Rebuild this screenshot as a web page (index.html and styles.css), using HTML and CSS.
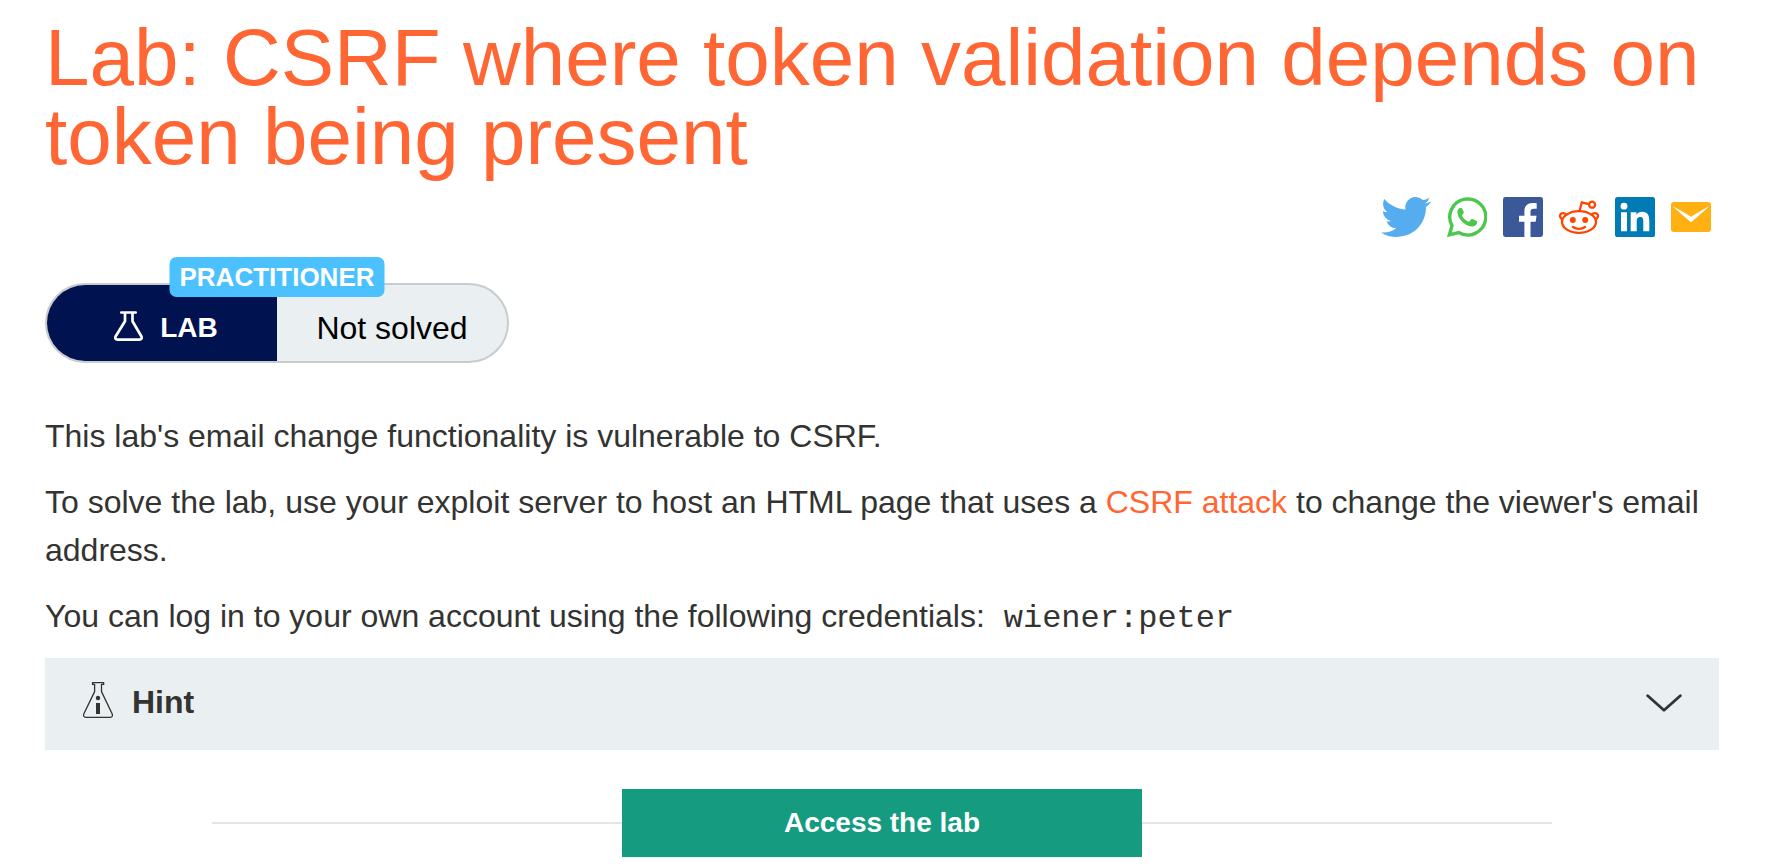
FILE: index.html
```html
<!DOCTYPE html>
<html lang="en">
<head>
<meta charset="utf-8">
<meta name="viewport" content="width=device-width, initial-scale=1">
<title>Lab: CSRF where token validation depends on token being present</title>
<link rel="stylesheet" href="styles.css">
</head>
<body>
<main class="page">
  <h1 class="title">Lab: CSRF where token validation depends on token being present</h1>

  <nav class="share" aria-label="Share">
    <a href="#" aria-label="Twitter">
      <svg class="share-icon share-icon-wide" viewBox="0 2.2 24 19.6" preserveAspectRatio="none"><path fill="#55acee" d="M23.953 4.57a10 10 0 01-2.825.775 4.958 4.958 0 002.163-2.723c-.951.555-2.005.959-3.127 1.184a4.92 4.92 0 00-8.384 4.482C7.69 8.095 4.067 6.13 1.64 3.162a4.822 4.822 0 00-.666 2.475c0 1.71.87 3.213 2.188 4.096a4.904 4.904 0 01-2.228-.616v.06a4.923 4.923 0 003.946 4.827 4.996 4.996 0 01-2.212.085 4.936 4.936 0 004.604 3.417 9.867 9.867 0 01-6.102 2.105c-.39 0-.779-.023-1.17-.067a13.995 13.995 0 007.557 2.209c9.053 0 13.998-7.496 13.998-13.985 0-.21 0-.42-.015-.63A9.935 9.935 0 0024 4.59z"/></svg>
    </a>
    <a href="#" aria-label="WhatsApp">
      <svg class="share-icon" viewBox="0 0 40 40"><path fill="none" stroke="#4bc84b" stroke-width="3.4" d="M2.4 37.8l2.6-9.2A18 18 0 1 1 11.700 35.500z"/><path fill="#4bc84b" d="M13 11.100c-1.800.5-2.800 2.400-2.600 4.600C11 22 18 28.800 24.500 29.400c3 .2 5-1.200 5.600-4 .1-.8 0-1-.6-1.300l-4-2c-.6-.3-1-.2-1.400.3l-1.700 2c-.4.4-.8.5-1.300.2-2.600-1.200-4.600-3-6-5.600-.2-.5-.1-.8.2-1.200l1.300-1.700c.3-.4.3-.8.1-1.300l-1.600-3.300c-.3-.6-1-.6-2.100-.4z"/></svg>
    </a>
    <a href="#" aria-label="Facebook">
      <svg class="share-icon" viewBox="0 0 40 40"><rect width="40" height="40" rx="2.400" fill="#3b5998"/><path fill="#fff" d="M21.400 40V24.700H16v-6h5.400v-4.400C21.400 9 24.600 6 29.400 6c1.600 0 3.200.1 4.300.2v5.600h-3c-2.500 0-3.200 1.200-3.200 3v3.900h6l-.8 6h-5.200V40z"/></svg>
    </a>
    <a href="#" aria-label="Reddit">
      <svg class="share-icon" viewBox="0 0 40 40"><g fill="none" stroke="#ff4500" stroke-width="2.300"><ellipse cx="20" cy="25" rx="17" ry="10.800"/><path d="M2.900 22.300C.1 19.900.4 16.400 3.800 16.100c1.700-.1 2.700.6 3.600 1.600M37.100 22.300c2.800-2.400 2.500-5.900-.9-6.200-1.700-.1-2.700.6-3.600 1.600M20.500 14l2.300-8.600 7 1.800M14 30c3.200 2.400 8.800 2.400 12 0" stroke-linecap="round"/><circle cx="33.100" cy="7.700" r="3"/></g><g fill="#ff4500"><circle cx="13.800" cy="23" r="3"/><circle cx="26.200" cy="23" r="3"/></g></svg>
    </a>
    <a href="#" aria-label="LinkedIn">
      <svg class="share-icon" viewBox="0 0 40 40"><rect width="40" height="40" rx="2.600" fill="#007bb6"/><g fill="#fff"><circle cx="9" cy="9.200" r="3.400"/><path d="M6 15.200h6v19.100H6zM15.700 15.200h5.700v2.600c.8-1.500 2.800-3.100 5.700-3.100 6 0 7.200 4 7.200 9.100v10.500h-6v-9.200c0-2.300 0-5.100-3.100-5.100s-3.500 2.400-3.500 4.900v9.400h-6z"/></g></svg>
    </a>
    <a href="#" aria-label="Email">
      <svg class="share-icon" viewBox="0 0 40 40"><rect y="5" width="40" height="30" rx="3.200" fill="#ffb013"/><path fill="#fff" d="M1.700 9.300Q11 14 20 19.800 29 14 38.300 9.300 29 18 20 25.200 11 18 1.700 9.300z"/></svg>
    </a>
  </nav>

  <section class="status" aria-label="Lab status">
    <span class="level">PRACTITIONER</span>
    <div class="pill">
      <div class="pill-type">
        <svg class="flask" viewBox="0 0 29 30"><path fill="none" stroke="#fff" stroke-width="2.700" stroke-linecap="round" stroke-linejoin="round" d="M7.300 1.500h14.400M11 1.500v8.800L1.700 25.200c-1 1.900-.1 3.400 1.900 3.400h21.800c2 0 2.900-1.500 1.900-3.400L18.500 10.300V1.500"/></svg>
        <span>LAB</span>
      </div>
      <div class="pill-state">Not solved</div>
    </div>
  </section>

  <section class="description">
    <p>This lab's email change functionality is vulnerable to CSRF.</p>
    <p>To solve the lab, use your exploit server to host an HTML page that uses a <a href="#">CSRF attack</a> to change the viewer's email address.</p>
    <p>You can log in to your own account using the following credentials: <code>wiener:peter</code></p>
  </section>

  <button class="hint" type="button" aria-expanded="false">
    <svg class="hint-flask" viewBox="0 0 30 36"><path fill="none" stroke="#333332" stroke-width="1.300" stroke-linejoin="round" d="M9.500.7h11.200v1.700h-2.200v7.200l10.600 22.100c.9 2 .1 3.600-1.900 3.600H2.800c-2 0-2.800-1.600-1.900-3.600L11.600 9.600V2.400H9.500z"/><circle cx="15" cy="16" r="2.200" fill="#333332"/><path fill="#333332" d="M13 21h4v11h-4z"/></svg>
    <span class="hint-label">Hint</span>
    <svg class="chevron" viewBox="0 0 36 20"><path fill="none" stroke="#333332" stroke-width="2.800" stroke-linecap="round" stroke-linejoin="round" d="M1.700 3.800L18 18.300l16.300-14.500"/></svg>
  </button>

  <div class="launch">
    <a class="launch-button" href="#">Access the lab</a>
  </div>
</main>
</body>
</html>
```
FILE: styles.css
```css
* {
  box-sizing: border-box;
}

body {
  margin: 0;
  background: #fff;
  color: #333332;
  font-family: "Liberation Sans", Arial, sans-serif;
  font-size: 32px;
  line-height: 48px;
}

a {
  color: #ff6633;
  text-decoration: none;
}

svg {
  display: block;
  flex: none;
}

.page {
  padding: 18px 49px 11px 45px;
}

.title {
  margin: 0;
  color: #ff6633;
  font-size: 80px;
  font-weight: 400;
  line-height: 79px;
}

.share {
  display: flex;
  justify-content: flex-end;
  gap: 16px;
  margin-top: 21px;
  padding-right: 8px;
}

.share-icon {
  width: 40px;
  height: 40px;
}

.share-icon-wide {
  width: 50px;
}

.status {
  position: relative;
  width: 464px;
  margin-top: 46px;
}

.level {
  position: absolute;
  top: -26px;
  left: 50%;
  transform: translateX(-50%);
  padding: 1px 10px 0;
  border-radius: 7px;
  background: #4cc1ff;
  color: #fff;
  font-size: 26px;
  font-weight: 700;
  line-height: 39px;
}

.pill {
  display: flex;
  height: 80px;
  overflow: hidden;
  border: 2px solid #c8cccc;
  border-radius: 40px;
  background: #eaeff2;
}

.pill-type,
.pill-state {
  display: flex;
  width: 50%;
  align-items: center;
  justify-content: center;
  padding-top: 10px;
}

.pill-type {
  gap: 17px;
  padding-left: 8px;
  background: #00124f;
  color: #fff;
  font-size: 28px;
  font-weight: 700;
}

.flask {
  width: 29px;
  height: 30px;
  margin-bottom: 4px;
}

.pill-state {
  color: #000;
}

.description {
  margin-top: 49px;
}

.description p {
  margin: 0 0 18px;
}

.description code {
  margin-left: 10px;
  font-family: "Liberation Mono", monospace;
  line-height: 1;
}

.hint {
  display: flex;
  align-items: center;
  width: 100%;
  height: 92px;
  padding: 0 37px 4px 38px;
  border: 0;
  background: #eaeff2;
  color: inherit;
  font: inherit;
  font-weight: 700;
  cursor: pointer;
}

.hint-flask {
  width: 30px;
  height: 36px;
  margin-bottom: 4px;
}

.hint-label {
  margin-left: 19px;
}

.chevron {
  width: 36px;
  height: 20px;
  margin-left: auto;
}

.launch {
  display: flex;
  align-items: center;
  width: 80%;
  margin: 39px auto 0;
}

.launch::before,
.launch::after {
  content: "";
  flex: 1;
  height: 2px;
  background: #e5e5e5;
}

.launch-button {
  width: 520px;
  padding: 10px 0;
  background: #159c80;
  color: #fff;
  font-size: 28px;
  font-weight: 700;
  text-align: center;
}
```
